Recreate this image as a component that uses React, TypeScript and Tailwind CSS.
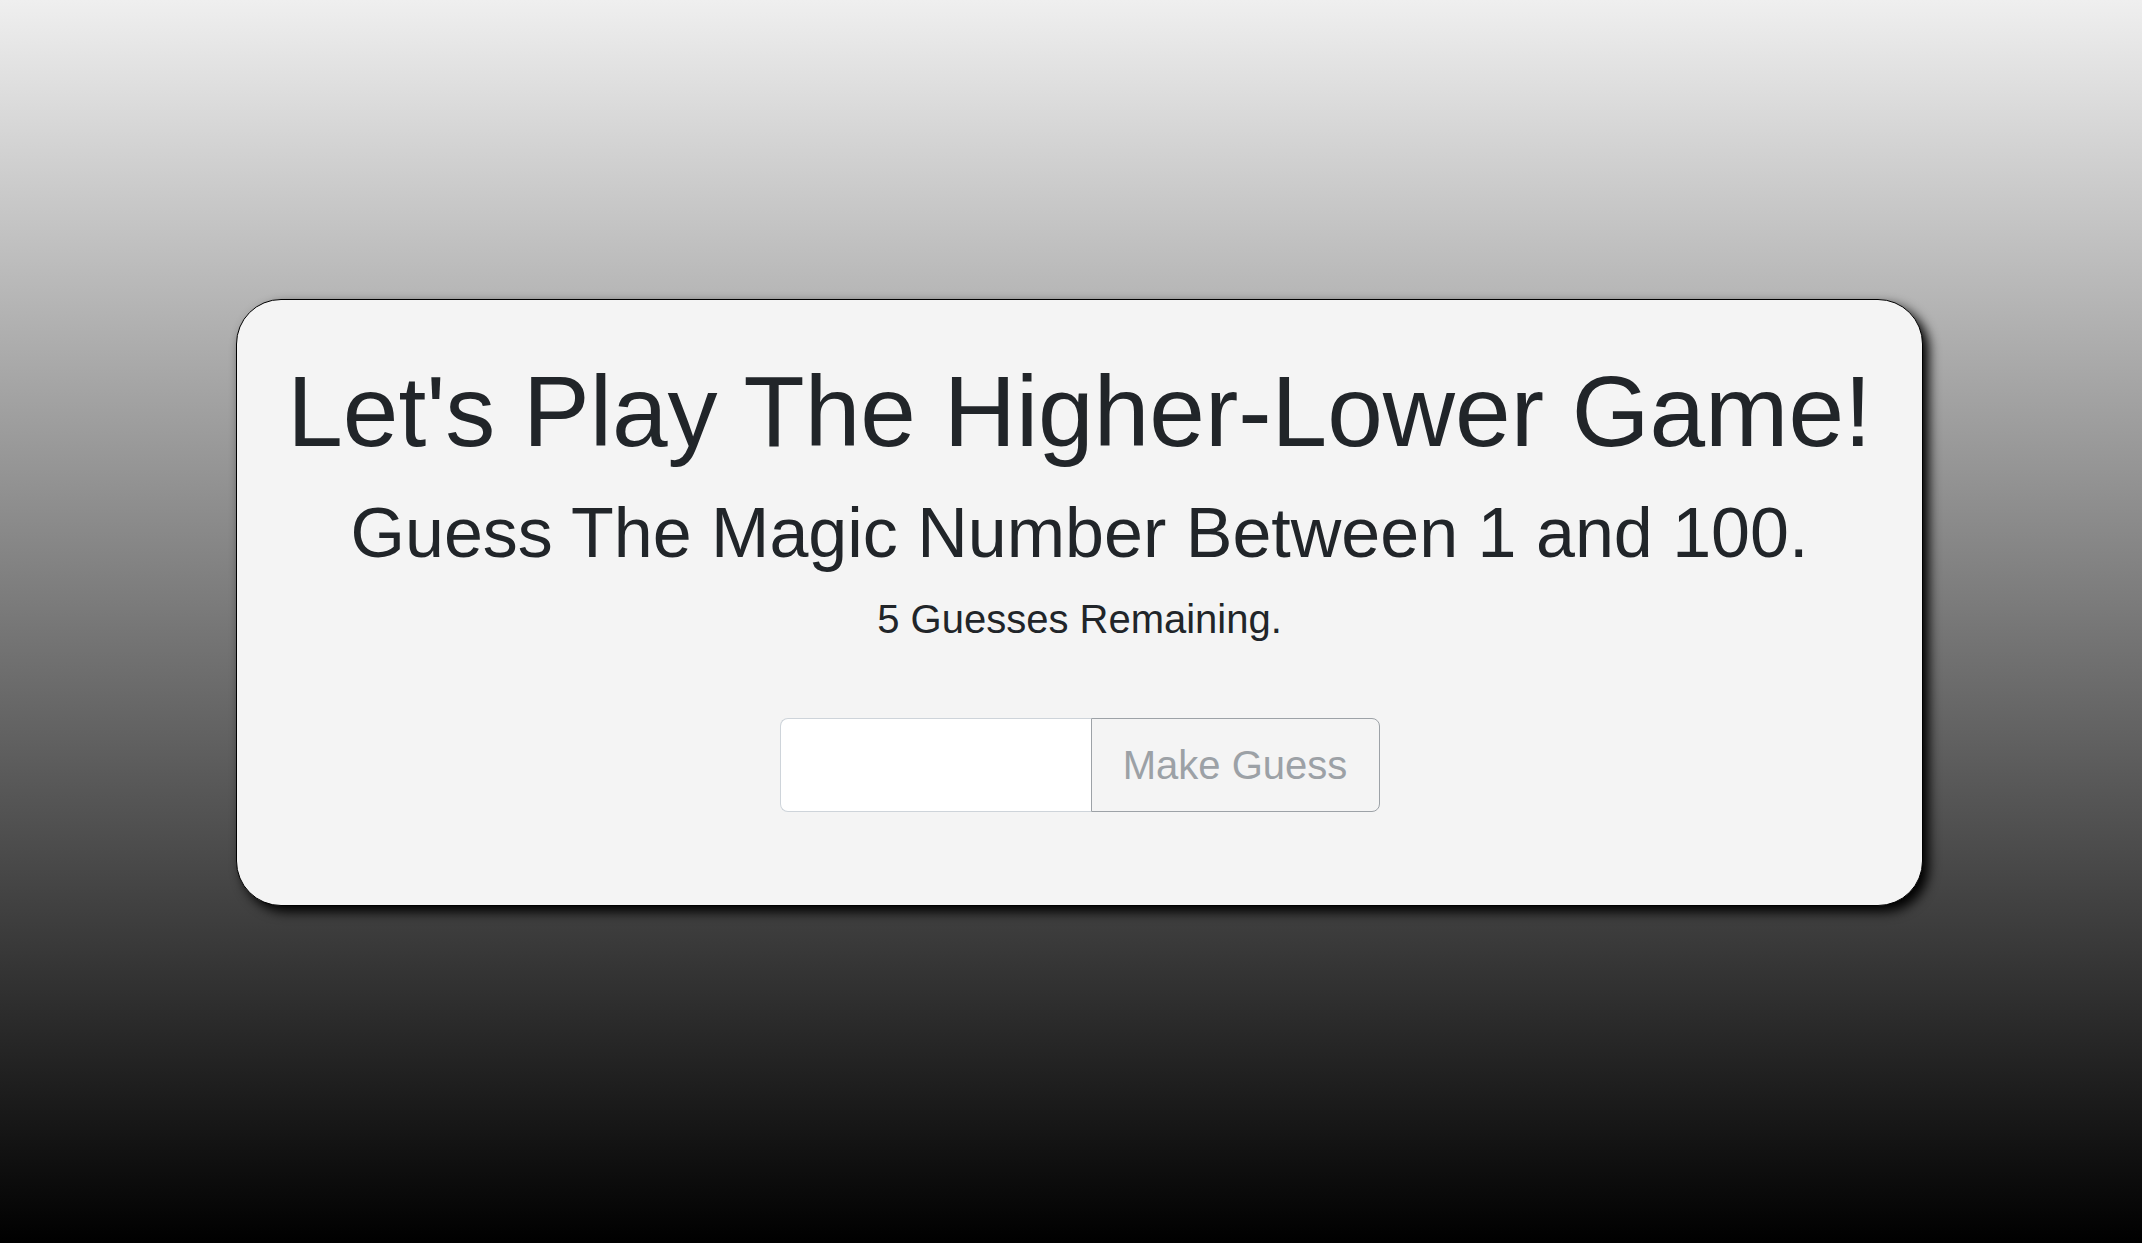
export default function App() {
  return (
    <div
      className="w-full h-[1243px] overflow-hidden bg-[linear-gradient(to_bottom,#efefef,#000000)] pt-[299px]"
      style={{ fontFamily: '"Liberation Sans", Arial, sans-serif' }}
    >
      <div className="ml-[236px] w-[1687px] h-[607px] rounded-[45px] border border-black bg-[#f4f4f4] shadow-[6px_6px_12px_#000] pt-[51px] flex flex-col items-center text-[#212529]">
        <h1 className="text-[100px] leading-[120px] font-normal mb-[20px] whitespace-nowrap">
          Let's Play The Higher-Lower Game!
        </h1>
        <h3 className="text-[70px] leading-[84px] font-normal mb-[14px] whitespace-nowrap">
          Guess The Magic Number Between 1 and 100.
        </h3>
        <p className="text-[40px] leading-[60px] mb-[69px] whitespace-nowrap">
          5 Guesses Remaining.
        </p>
        <div className="flex h-[94px]">
          <input
            type="text"
            className="w-[311px] h-full bg-white border border-r-0 border-[#ced4da] rounded-l-[8px] outline-none px-[30px] text-[40px]"
          />
          <button
            disabled
            className="w-[289px] h-full border border-[#9da2a7] rounded-r-[8px] bg-transparent text-[#9ca1a6] text-[40px] leading-[60px] flex items-center justify-center"
          >
            Make Guess
          </button>
        </div>
      </div>
    </div>
  );
}
